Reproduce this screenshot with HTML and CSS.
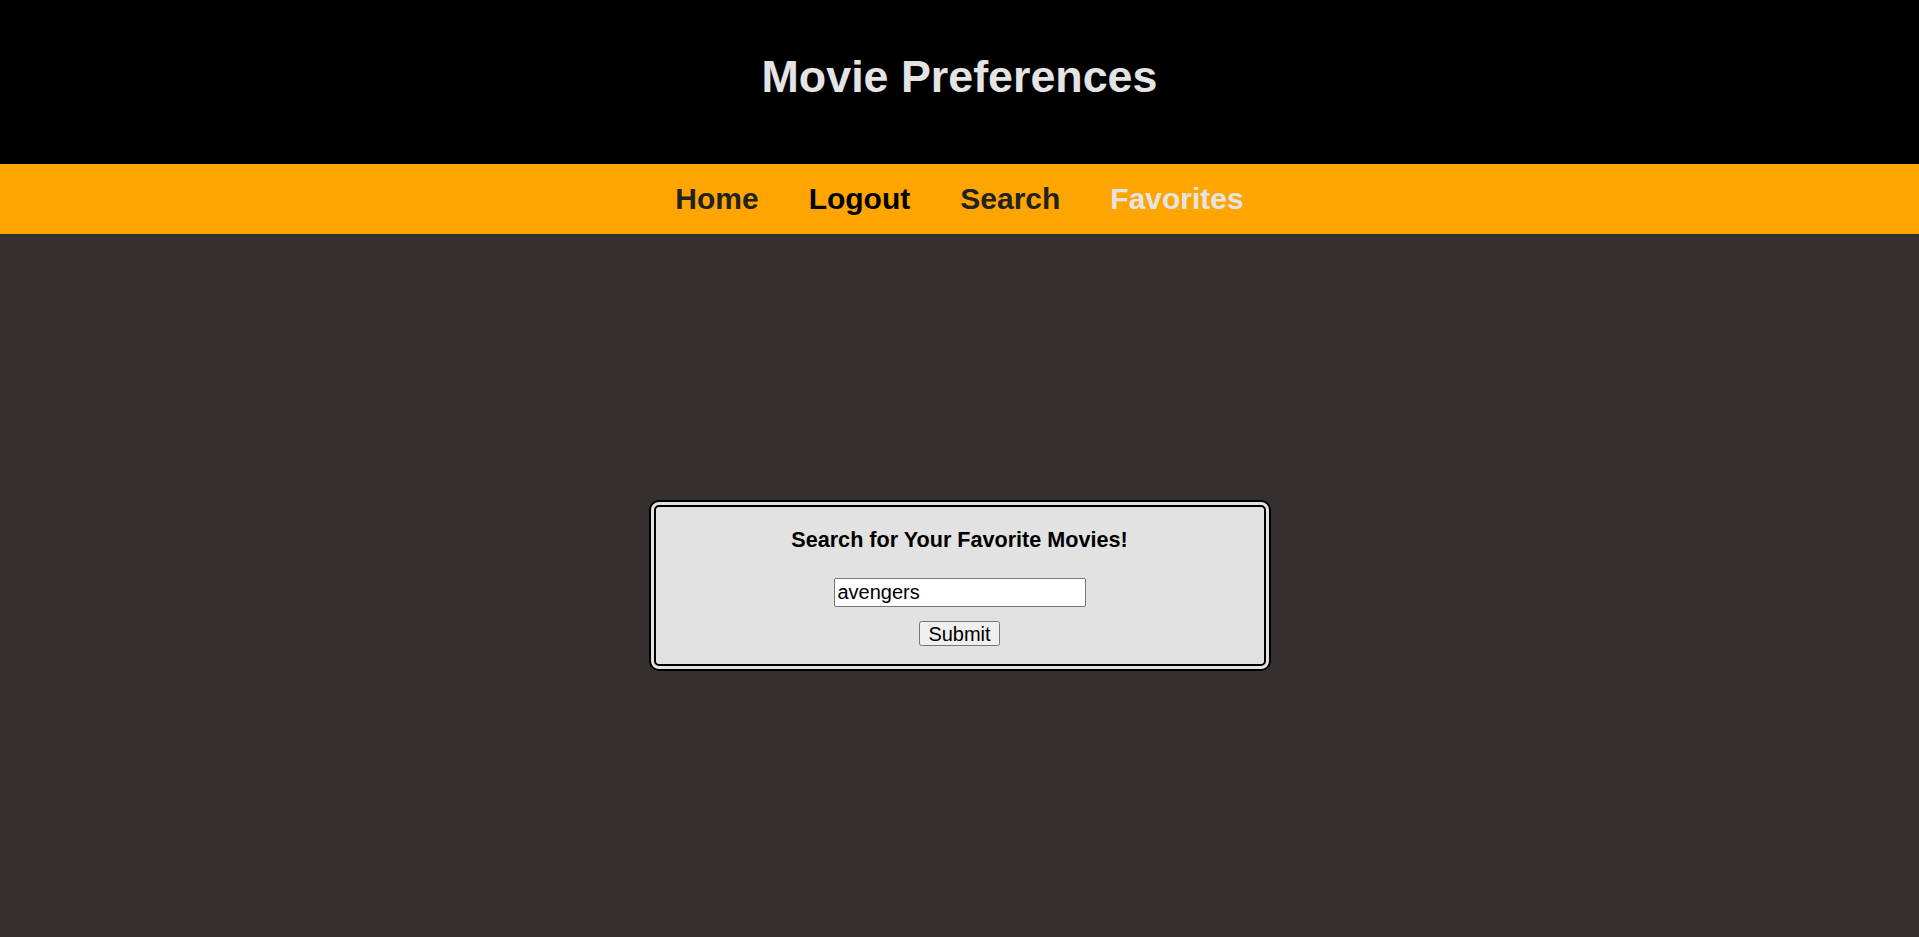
FILE: index.html
```html
<!DOCTYPE html>
<html lang="en">
<head>
<meta charset="utf-8">
<title>Movie Preferences</title>
<link rel="stylesheet" href="styles.css">
</head>
<body>
<header class="site-header">
  <h1 class="site-title">Movie Preferences</h1>
</header>
<nav class="site-nav">
  <a class="nav-link nav-home" href="#">Home</a>
  <a class="nav-link nav-logout" href="#">Logout</a>
  <a class="nav-link nav-search" href="#">Search</a>
  <a class="nav-link nav-active" href="#">Favorites</a>
</nav>
<main class="main">
  <form class="search-card">
    <h3 class="search-title">Search for Your Favorite Movies!</h3>
    <input class="search-input" type="text" value="avengers">
    <button class="search-btn" type="submit">Submit</button>
  </form>
</main>
</body>
</html>
```
FILE: styles.css
```css
html, body {
  margin: 0;
  padding: 0;
}
body {
  font-family: "Liberation Sans", Arial, sans-serif;
  background: #33302f;
  min-height: 100vh;
  display: flex;
  flex-direction: column;
}
.site-header {
  background: #000;
  height: 164px;
  box-sizing: border-box;
  padding-top: 51px;
  display: flex;
  justify-content: center;
  align-items: flex-start;
}
.site-title {
  margin: 0;
  font-size: 44.8px;
  line-height: 1.15;
  font-weight: bold;
  color: #e4e4e4;
}
.site-nav {
  background: #ffa500;
  height: 70px;
  display: flex;
  justify-content: center;
  align-items: center;
}
.nav-link {
  font-size: 30px;
  font-weight: bold;
  line-height: 1.15;
  text-decoration: none;
  padding: 0 25px;
  color: #222;
}
.nav-logout {
  color: #000;
}
.nav-active {
  color: #e4e4e4;
}
.main {
  flex: 1;
  display: flex;
  justify-content: center;
  align-items: center;
}
.search-card {
  width: 622px;
  box-sizing: border-box;
  background: #e2e2e2;
  border: 7px double #000;
  border-radius: 10px;
  padding: 20px 0 18px;
  display: flex;
  flex-direction: column;
  align-items: center;
}
.search-title {
  margin: 0 0 25px;
  font-size: 21.6px;
  font-weight: bold;
  line-height: normal;
  color: #000;
}
.search-input {
  font-family: "Liberation Sans", Arial, sans-serif;
  font-size: 20px;
  width: 252px;
  height: 29px;
  box-sizing: border-box;
  margin: 0 0 14px;
}
.search-btn {
  font-family: "Liberation Sans", Arial, sans-serif;
  font-size: 20px;
  width: 81px;
  height: 25px;
  padding: 0;
  margin: 0;
  color: #000;
}
```
